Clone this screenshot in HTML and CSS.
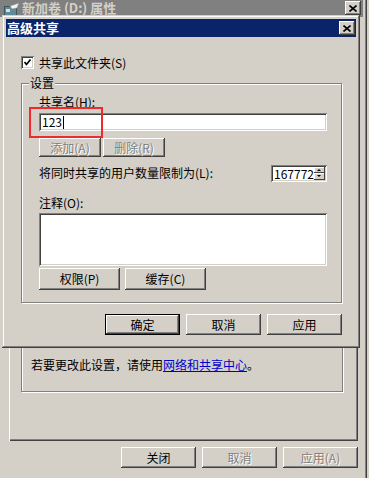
FILE: index.html
```html
<!DOCTYPE html>
<html lang="zh-CN">
<head>
  <meta charset="UTF-8" />
  <title>高级共享</title>
  <link rel="stylesheet" href="styles.css">
</head>
<body>

  <!-- fenêtre de propriétés en arrière-plan -->
  <div class="win props">
    <div class="titlebar inactive">
      <svg class="ticon" width="16" height="14" viewBox="0 0 16 14">
        <rect x="0.5" y="3.5" width="12" height="9" fill="#5f8a96" stroke="#3b5560"/>
        <rect x="2" y="6" width="4" height="3" fill="#c9e3e6"/>
        <path d="M6 3 L15 0 L13 5 L8 6 Z" fill="#f4f4f4" stroke="#8a8a8a" stroke-width="0.6"/>
      </svg>
      <span class="ttext">新加卷 (D:) 属性</span>
      <button class="tclose">
        <svg width="8" height="7" viewBox="0 0 8 7"><path d="M0.5 0.5 L7.5 6.5 M7.5 0.5 L0.5 6.5" stroke="#000" stroke-width="1.6"/></svg>
      </button>
    </div>
    <div class="tabpage">
      <div class="note">若要更改此设置，请使用<a href="#">网络和共享中心</a>。</div>
    </div>
    <div class="actions wide">
      <button class="btn">关闭</button>
      <button class="btn" disabled>取消</button>
      <button class="btn" disabled>应用(A)</button>
    </div>
  </div>

  <!-- boîte de dialogue au premier plan -->
  <div class="win dialog">
    <div class="titlebar">
      <span class="ttext">高级共享</span>
      <button class="tclose">
        <svg width="8" height="7" viewBox="0 0 8 7"><path d="M0.5 0.5 L7.5 6.5 M7.5 0.5 L0.5 6.5" stroke="#000" stroke-width="1.6"/></svg>
      </button>
    </div>

    <div class="dlg-body">
      <label class="check">
        <span class="box">
          <svg width="13" height="13" viewBox="0 0 13 13"><path d="M3.5 6 L5.5 8.5 L9.5 3.5" fill="none" stroke="#000" stroke-width="1.7"/></svg>
        </span>
        共享此文件夹(S)
      </label>

      <fieldset class="group">
        <legend>设置</legend>
        <div class="lbl">共享名(H):</div>
        <div class="field name">123<span class="caret"></span></div>
        <div class="btnrow">
          <button class="btn small" disabled>添加(A)</button>
          <button class="btn small" disabled>删除(R)</button>
        </div>
        <div class="limit-row">
          <span>将同时共享的用户数量限制为(L):</span>
          <div class="spin">
            <span class="spin-val">167772</span>
            <div class="spin-btns">
              <span class="spin-btn"><i class="up"></i></span>
              <span class="spin-btn"><i class="down"></i></span>
            </div>
          </div>
        </div>
        <div class="lbl memo-lbl">注释(O):</div>
        <div class="field memo"></div>
        <div class="btnrow big">
          <button class="btn mid">权限(P)</button>
          <button class="btn mid">缓存(C)</button>
        </div>
      </fieldset>

      <div class="actions">
        <button class="btn default">确定</button>
        <button class="btn">取消</button>
        <button class="btn">应用</button>
      </div>
    </div>

    <div class="mark"></div>
  </div>

</body>
</html>
```

FILE: styles.css
```css
body {
  margin: 0;
  width: 369px;
  height: 478px;
  overflow: hidden;
  position: relative;
  background: #d4d0c8;
  font-family: "Noto Sans CJK SC", sans-serif;
  font-size: 12px;
  color: #000;
}

button {
  font-family: inherit;
  font-size: 12px;
}

/* fenêtres classiques */
.win {
  position: absolute;
  box-sizing: border-box;
  padding: 4px;
  background: #d4d0c8;
  box-shadow: inset -1px -1px #404040, inset 1px 1px #d4d0c8,
              inset -2px -2px #808080, inset 2px 2px #fff;
}

.props {
  left: -4px;
  top: -5px;
  width: 371px;
  height: 500px;
}

.dialog {
  left: 2px;
  top: 15px;
  width: 358px;
  height: 333px;
}

.titlebar {
  height: 18px;
  display: flex;
  align-items: center;
  background: #0a246a;
  color: #fff;
}

.titlebar.inactive {
  background: #808080;
  color: #d4d0c8;
}

.ticon {
  margin-left: 4px;
  margin-top: 3px;
}

.ttext {
  flex: 1;
  font-weight: bold;
  font-size: 13px;
  line-height: 18px;
  padding-left: 1px;
  white-space: pre;
}

.props .ttext {
  padding-left: 2px;
  line-height: 14px;
}

.tclose {
  width: 16px;
  height: 14px;
  margin-right: 1px;
  padding: 0;
  border: 0;
  background: #d4d0c8;
  display: flex;
  align-items: center;
  justify-content: center;
  box-shadow: inset -1px -1px #404040, inset 1px 1px #fff,
              inset -2px -2px #808080, inset 2px 2px #d4d0c8;
}

.props .tclose {
  margin-right: 2px;
}

/* boutons */
.btn {
  width: 75px;
  height: 21px;
  padding: 0;
  border: 0;
  background: #d4d0c8;
  color: #000;
  line-height: 21px;
  box-shadow: inset -1px -1px #404040, inset 1px 1px #fff,
              inset -2px -2px #808080, inset 2px 2px #d4d0c8;
}

.btn:disabled {
  color: #808080;
  text-shadow: 1px 1px #fff;
}

.btn.default {
  box-shadow: inset 0 0 0 1px #000, inset -2px -2px #404040, inset 2px 2px #fff,
              inset -3px -3px #808080;
}

.btn.small {
  width: 62px;
  height: 19px;
  line-height: 19px;
}

.btn.mid {
  width: 81px;
  height: 22px;
  line-height: 22px;
}

.actions {
  display: flex;
  justify-content: flex-end;
  gap: 6px;
  width: 321px;
  margin-top: 11px;
}

.actions.wide {
  width: auto;
  margin-top: 6px;
  margin-right: 5px;
}

/* page d'onglet en arrière-plan */
.tabpage {
  box-sizing: border-box;
  margin: 21px 0 0 9px;
  width: 349px;
  height: 403px;
  padding: 0 0 49px 12px;
  display: flex;
  flex-direction: column;
  justify-content: flex-end;
  box-shadow: inset 1px 1px #fff, inset -1px -1px #404040, inset -2px -2px #808080;
}

.note {
  box-sizing: border-box;
  width: 322px;
  padding: 20px 0 19px 9px;
  line-height: 14px;
  border: 1px solid #808080;
  box-shadow: inset 1px 1px #fff, 1px 1px #fff;
}

.note a {
  color: #0000cc;
  text-decoration: underline;
}

/* contenu du dialogue */
.dlg-body {
  padding: 19px 0 0 15px;
}

.check {
  display: flex;
  align-items: center;
  gap: 5px;
  height: 13px;
  line-height: 13px;
}

.box {
  width: 13px;
  height: 13px;
  background: #fff;
  box-shadow: inset 1px 1px #808080, inset -1px -1px #fff,
              inset 2px 2px #404040, inset -2px -2px #d4d0c8;
}

.box svg {
  display: block;
}

.group {
  box-sizing: border-box;
  width: 321px;
  margin: 7px 0 0 0;
  padding: 5px 0 12px 17px;
  border: 1px solid #808080;
  box-shadow: inset 1px 1px #fff, 1px 1px #fff;
  min-width: 0;
}

.group legend {
  margin-left: -10px;
  padding: 0 1px;
  line-height: 14px;
  background: #d4d0c8;
}

.lbl {
  line-height: 14px;
}

.field {
  box-sizing: border-box;
  width: 288px;
  background: #fff;
  box-shadow: inset 1px 1px #808080, inset -1px -1px #fff,
              inset 2px 2px #404040, inset -2px -2px #d4d0c8;
}

.field.name {
  height: 18px;
  margin-top: 4px;
  padding: 0 3px;
  line-height: 18px;
  display: flex;
  align-items: center;
}

.caret {
  width: 1px;
  height: 13px;
  margin-left: 1px;
  background: #000;
}

.btnrow {
  display: flex;
  gap: 2px;
  margin-top: 7px;
}

.btnrow.big {
  gap: 5px;
  margin-top: 2px;
}

.limit-row {
  width: 288px;
  height: 18px;
  margin-top: 7px;
  display: flex;
  justify-content: space-between;
  align-items: center;
  line-height: 14px;
}

.spin {
  box-sizing: border-box;
  width: 56px;
  height: 17px;
  padding: 2px;
  display: flex;
  background: #fff;
  box-shadow: inset 1px 1px #808080, inset -1px -1px #fff,
              inset 2px 2px #404040, inset -2px -2px #d4d0c8;
}

.spin-val {
  flex: 1;
  line-height: 13px;
  padding-left: 1px;
}

.spin-btns {
  width: 15px;
  display: flex;
  flex-direction: column;
}

.spin-btn {
  flex: 1;
  display: flex;
  align-items: center;
  justify-content: center;
  background: #d4d0c8;
  box-shadow: inset -1px -1px #404040, inset 1px 1px #fff;
}

.spin-btn i {
  width: 0;
  height: 0;
  border-left: 2px solid transparent;
  border-right: 2px solid transparent;
}

.spin-btn .up {
  border-bottom: 2px solid #000;
}

.spin-btn .down {
  border-top: 2px solid #000;
}

.memo-lbl {
  margin-top: 14px;
}

.field.memo {
  height: 53px;
  margin-top: 3px;
}

/* cadre rouge d'annotation */
.mark {
  position: absolute;
  left: 27px;
  top: 92px;
  width: 74px;
  height: 31px;
  box-sizing: border-box;
  border: 2px solid #ee2a2e;
}
```
